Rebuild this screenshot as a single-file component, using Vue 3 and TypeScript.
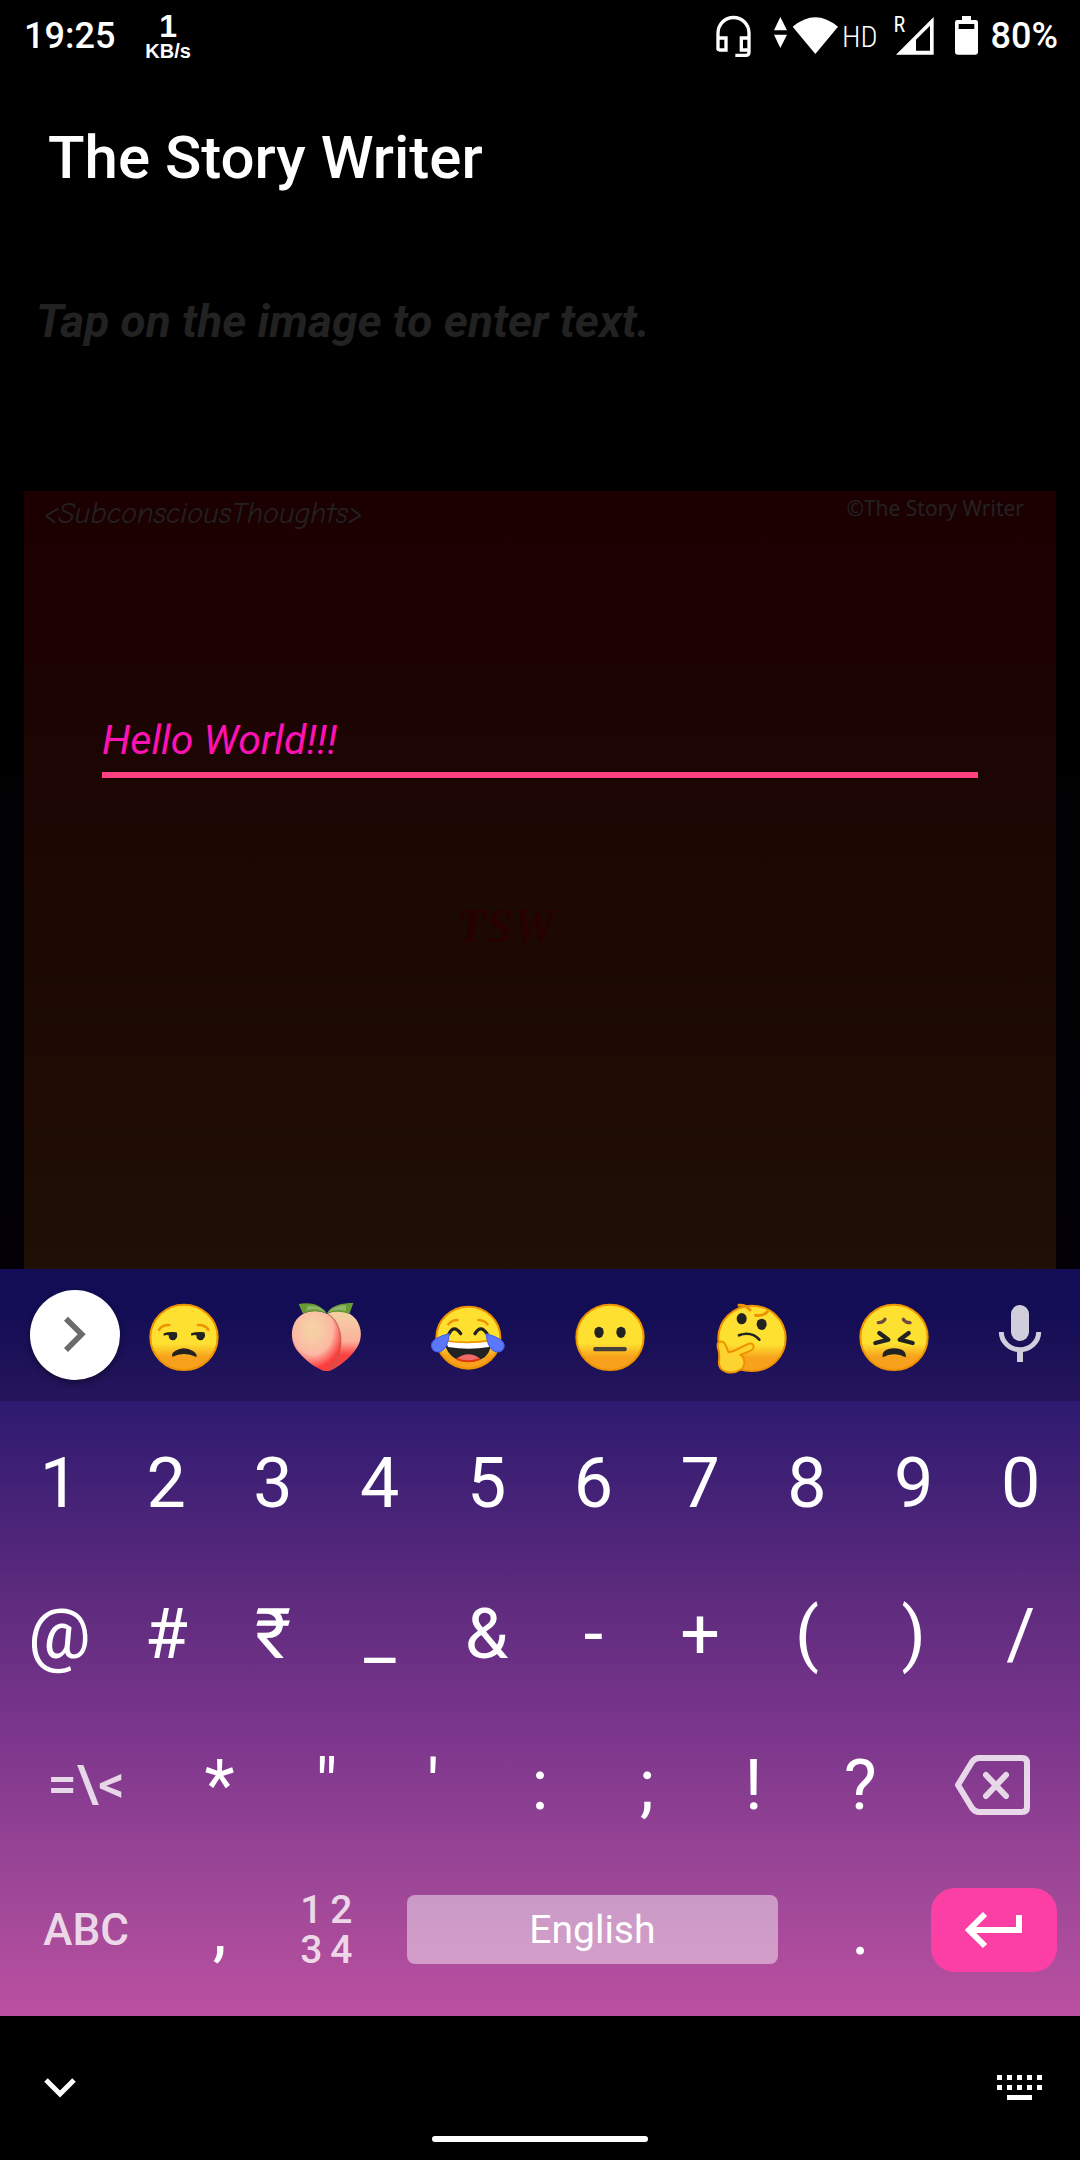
<script setup lang="ts">
import { ref } from 'vue'

const story = ref('Hello World!!!')

const digitRow: string[] = ['1', '2', '3', '4', '5', '6', '7', '8', '9', '0']
const symbolRow: string[] = ['@', '#', '₹', '_', '&', '-', '+', '(', ')', '/']
const punctuationRow: string[] = ['*', '"', "'", ':', ';', '!', '?']

function type(key: string): void {
  story.value += key
}

function erase(): void {
  story.value = story.value.slice(0, -1)
}
</script>

<template>
  <div class="phone">
    <header class="status">
      <span class="clock">19:25</span>
      <span class="speed"><b class="rate">1</b><span class="unit">KB/s</span></span>
      <span class="status-icons">
        <svg class="i-head" viewBox="105 42 111 132" fill="none" stroke="#fff" stroke-width="10">
          <path d="M114 150V99a46 46 0 0 1 93 0v58q0 9-9 9h-32M114 114h24v36h-19q-5 0-5-5M207 114h-23v36h23" />
        </svg>
        <svg class="i-arrows" viewBox="279 42 45 132" fill="#fff">
          <path d="M301 51l20 40h-39zM282 104h39l-20 40z" />
        </svg>
        <svg class="i-wifi" viewBox="336 42 141 132" fill="#fff">
          <path d="M338 80q68-57 136 0l-68 82z" />
        </svg>
        <span class="hd">HD</span>
        <span class="signal">
          <span class="roam">R</span>
          <svg class="i-signal" viewBox="642 42 120 132" fill="#fff">
            <path fill-rule="evenodd" d="M761 51v113H648zM750 77l-42 42v33h42z" />
          </svg>
        </span>
        <svg class="i-battery" viewBox="822 42 75 132">
          <path fill="#fff" fill-rule="evenodd" d="M846 48h27v12h14q7 0 7 7v90q0 7-7 7h-55q-7 0-7-7V67q0-7 7-7h14zM836 72v15h47V72z" />
        </svg>
        <span class="percent">80%</span>
      </span>
    </header>

    <h1 class="title">The Story Writer</h1>

    <main class="content">
      <p class="hint">Tap on the image to enter text.</p>
      <section class="canvas">
        <div class="canvas-head">
          <span class="tag">&lt;SubconsciousThoughts&gt;</span>
          <span class="credit">©The Story Writer</span>
        </div>
        <input v-model="story" class="story" type="text" aria-label="Story text" />
        <p class="monogram">TSW</p>
      </section>
    </main>

    <section class="keyboard">
      <div class="strip">
        <button class="expand" aria-label="More">
          <svg viewBox="90 90 270 270" fill="none" stroke="#6b6b6b" stroke-width="17">
            <path d="M198 176l47 47-47 47" />
          </svg>
        </button>

        <button class="emoji" aria-label="Unamused face">
          <svg viewBox="444 117 216 216">
            <defs>
              <linearGradient id="face" x1="0" y1="0" x2="0" y2="1">
                <stop offset="0.6" stop-color="#fde030" />
                <stop offset="0.8" stop-color="#f7a11c" />
              </linearGradient>
            </defs>
            <ellipse cx="552" cy="232" rx="101" ry="98" fill="url(#face)" stroke="#ee9200" stroke-width="6" />
            <g fill="none" stroke="#ee9200" stroke-width="8" stroke-linecap="round">
              <path d="M477 209q10-15 31-14M594 195q21-1 31 14" />
            </g>
            <path fill="#222" d="M491 220q18-6 39-3 3 8 1 15-5 10-14 9-11-2-11-15-7-2-15 1zM573 220q18-6 40-3 4 8 1 15-5 10-14 9-11-2-11-15-7-2-15 1zM517 290q-4-10 9-18 26-16 54 2 13 9 9 17-36-18-72-1z" />
          </svg>
        </button>

        <button class="emoji" aria-label="Peach">
          <svg viewBox="870 117 216 216">
            <defs>
              <radialGradient id="peach" cx="0.42" cy="0.3" r="0.75">
                <stop offset="0.15" stop-color="#f5d0a4" />
                <stop offset="0.55" stop-color="#fdb7a4" />
                <stop offset="0.85" stop-color="#fc3c3c" />
                <stop offset="1" stop-color="#e84444" />
              </radialGradient>
              <linearGradient id="half" x1="0" y1="0" x2="0" y2="1">
                <stop offset="0.1" stop-color="#f5cda3" />
                <stop offset="0.5" stop-color="#fdb09c" />
                <stop offset="0.72" stop-color="#fb4141" />
                <stop offset="1" stop-color="#e34747" />
              </linearGradient>
            </defs>
            <path fill="url(#half)" d="M980 163c28-18 68-11 88 15 20 28 20 66-4 95-22 28-54 53-84 63z" />
            <path fill="url(#peach)" d="M980 161c-32-15-69-9-90 17-20 26-20 70 6 99 26 30 55 50 84 59 26-10 40-42 43-84 2-45-16-78-43-91z" />
            <path fill="none" stroke="#b5604e" stroke-width="4" stroke-opacity="0.7" d="M984 162c31 20 43 60 37 101-5 30-13 45-24 59" />
            <path fill="#679c35" d="M896 132c36-6 68 2 84 29-24-10-48-9-71 0zM1060 129c-32 0-66 6-80 32 22-9 46-6 68 1z" />
            <path fill="#8db668" d="M925 137q41 1 55 22-30-18-63-7zM1037 135q-38 3-56 25 25-15 57-7z" />
          </svg>
        </button>

        <button class="emoji" aria-label="Face with tears of joy">
          <svg class="wide" viewBox="145 117 240 216">
            <ellipse cx="266" cy="233" rx="96" ry="93" fill="url(#face)" stroke="#ee9200" stroke-width="6" />
            <g fill="none" stroke="#ee9200" stroke-width="7" stroke-linecap="round">
              <path d="M206 193q10-13 28-13M296 180q19 1 28 13" />
            </g>
            <g fill="none" stroke="#222" stroke-width="10" stroke-linecap="round">
              <path d="M208 221q15-29 35 0M286 221q17-29 36 0" />
            </g>
            <path fill="#222" d="M195 250q70 8 140-2-3 37-31 50-39 16-76-2-27-14-33-46z" />
            <path fill="#fff" d="M199 244q66 10 133-1l-4 18q-61 10-123 0z" />
            <path fill="none" stroke="#ee9200" stroke-width="5" d="M200 243q66 9 131-1" />
            <path fill="#ef6b68" d="M229 297q36-28 73-1-37 18-73 1z" />
            <path fill="none" stroke="#e0380d" stroke-width="6" d="M231 297q35 14 69 0" />
            <path fill="#5b78fb" stroke="#3f5ee8" stroke-width="3" d="M209 221q-5 50-31 55-22 1-23-22 3-21 54-33zM319 221q6 52 32 55 21 2 23-20-2-21-55-35z" />
          </svg>
        </button>

        <button class="emoji" aria-label="Neutral face">
          <svg viewBox="583 117 216 216">
            <ellipse cx="691" cy="232" rx="101" ry="98" fill="url(#face)" stroke="#ee9200" stroke-width="6" />
            <ellipse cx="658" cy="217" rx="14" ry="17" fill="#222" />
            <ellipse cx="724" cy="217" rx="14" ry="17" fill="#222" />
            <rect x="641" y="261" width="100" height="13" rx="5" fill="#443f3c" />
          </svg>
        </button>

        <button class="emoji" aria-label="Thinking face">
          <svg class="tall" viewBox="49 105 216 240">
            <ellipse cx="157" cy="235" rx="101" ry="98" fill="url(#face)" stroke="#ee9200" stroke-width="6" />
            <g fill="none" stroke="#ee9200" stroke-linecap="round">
              <path stroke-width="9" d="M118 136q20-2 33 14M168 166q22 3 35-11" />
            </g>
            <ellipse cx="126" cy="176" rx="15" ry="17" fill="#222" />
            <ellipse cx="186" cy="193" rx="15" ry="17" fill="#222" />
            <path fill="none" stroke="#222" stroke-width="8" stroke-linecap="round" d="M118 226q36-14 61 13" />
            <path fill="#fdd32f" stroke="#ee9200" stroke-width="6" stroke-linejoin="round" d="M55 249q9-9 19 0 7 9 12 28l16-4 45-22q15-3 15 10-1 9-14 13l-26 11q12 4 10 15 5 8 0 16-1 11-12 14-17 12-42 5-23-8-20-32 2-17-1-31-5-13-2-23z" />
          </svg>
        </button>

        <button class="emoji" aria-label="Persevering face">
          <svg viewBox="475 117 216 216">
            <ellipse cx="583" cy="232" rx="101" ry="98" fill="url(#face)" stroke="#ee9200" stroke-width="6" />
            <g fill="none" stroke="#6d4c41" stroke-width="10" stroke-linecap="round">
              <path d="M536 188q15 0 20-10M611 178q6 10 20 10" />
            </g>
            <g fill="none" stroke="#222" stroke-width="13" stroke-linecap="round" stroke-linejoin="round">
              <path d="M539 219l27 20-39 10M627 219l-27 20 39 10" />
            </g>
            <path fill="#222" d="M549 292q-4-25 34-27 39 2 35 27-34-19-69 0z" />
          </svg>
        </button>

        <button class="emoji" aria-label="Voice input">
          <svg viewBox="852 117 216 216">
            <rect x="933" y="135" width="54" height="108" rx="27" fill="#d0cedd" />
            <path fill="none" stroke="#d0cedd" stroke-width="15" d="M904 216a56 53 0 0 0 112 0" />
            <path stroke="#d0cedd" stroke-width="18" d="M960 270v36" />
          </svg>
        </button>
      </div>

      <div class="keys">
        <div class="row">
          <button v-for="k in digitRow" :key="k" class="key" @click="type(k)">{{ k }}</button>
        </div>
        <div class="row">
          <button v-for="k in symbolRow" :key="k" class="key" @click="type(k)">{{ k }}</button>
        </div>
        <div class="row">
          <button class="key side shift">=\&lt;</button>
          <button v-for="k in punctuationRow" :key="k" class="key" @click="type(k)">{{ k }}</button>
          <button class="key side" aria-label="Backspace" @click="erase">
            <svg class="i-back" viewBox="0 0 82 62" fill="none" stroke="currentColor" stroke-width="6">
              <path stroke-linejoin="round" d="M5 31L19 8q3-4 7-4h43q5 0 5 5v44q0 5-5 5H26q-4 0-7-4z" />
              <path stroke-linecap="round" d="M33 21l20 21M53 21L33 42" />
            </svg>
          </button>
        </div>
        <div class="row last">
          <button class="key side">ABC</button>
          <button class="key" @click="type(',')">,</button>
          <button class="key numpad" aria-label="Number pad">
            <span>1</span><span>2</span><span>3</span><span>4</span>
          </button>
          <div class="space-cell">
            <button class="space" @click="type(' ')">English</button>
          </div>
          <button class="key" @click="type('.')">.</button>
          <div class="enter-cell">
            <button class="enter" aria-label="Enter">
              <svg viewBox="0 0 60 38" fill="none" stroke="#fff" stroke-width="6">
                <path d="M21 3L5 19l16 16M6 19h49V4" />
              </svg>
            </button>
          </div>
        </div>
      </div>
    </section>

    <footer class="nav">
      <button class="nav-button" aria-label="Hide keyboard">
        <svg class="i-down" viewBox="0 0 32 20" fill="none" stroke="#fff" stroke-width="5">
          <path d="M2 2l14 14L30 2" />
        </svg>
      </button>
      <span class="home"></span>
      <button class="nav-button" aria-label="Switch keyboard">
        <svg class="i-kbd" viewBox="0 0 46 26" fill="#fff">
          <path d="M0 0h5v5H0zM10 0h5v5h-5zM20 0h5v5h-5zM30 0h5v5h-5zM40 0h5v5h-5zM0 10h5v5H0zM10 10h5v5h-5zM20 10h5v5h-5zM30 10h5v5h-5zM40 10h5v5h-5zM10 20h25v5H10z" />
        </svg>
      </button>
    </footer>
  </div>
</template>

<style>
body {
  margin: 0;
  background: #000;
}
</style>

<style scoped>
.phone {
  display: flex;
  flex-direction: column;
  min-height: 100vh;
  background: #000;
  color: #fff;
  font-family: Roboto, "Noto Sans", sans-serif;
}
button {
  margin: 0;
  padding: 0;
  border: 0;
  background: none;
  color: inherit;
  font: inherit;
}
svg {
  display: block;
  flex: none;
}

.status {
  display: flex;
  align-items: center;
  height: 72px;
  padding: 0 22px 0 24px;
  font-size: 36px;
  font-weight: 500;
}
.clock,
.percent {
  line-height: 76px;
}
.speed {
  display: flex;
  flex-direction: column;
  align-items: center;
  margin-left: 30px;
  font-family: "Liberation Sans", sans-serif;
  font-weight: 700;
}
.rate {
  font-size: 32px;
  line-height: 30px;
}
.unit {
  font-size: 20px;
  line-height: 20px;
}
.status-icons {
  display: flex;
  align-items: center;
  margin-left: auto;
}
.i-head { width: 37px; height: 44px; }
.i-arrows { width: 15px; height: 44px; margin-left: 21px; }
.i-wifi { width: 47px; height: 44px; margin-left: 4px; }
.hd {
  margin-left: 3px;
  font-family: "Roboto Condensed", Roboto, sans-serif;
  font-size: 30px;
  font-weight: 300;
}
.signal {
  position: relative;
  margin-left: 16px;
}
.i-signal { width: 40px; height: 44px; }
.roam {
  position: absolute;
  top: 0;
  left: 0;
  font-family: "Roboto Condensed", Roboto, sans-serif;
  font-size: 22px;
  font-weight: 400;
  line-height: 22px;
}
.i-battery { width: 25px; height: 44px; margin-left: 20px; }
.percent { margin-left: 12px; }

.title {
  margin: 0;
  padding: 0 48px;
  font-size: 60px;
  font-weight: 500;
  line-height: 172px;
}
.content {
  display: flex;
  flex: 1;
  flex-direction: column;
  padding: 0 24px;
  background: linear-gradient(#000 260px, #020005);
}
.hint {
  margin: 45px 0 138px;
  padding: 0 12px;
  color: #222;
  font-size: 46px;
  font-style: italic;
  font-weight: 700;
  line-height: 64px;
}
.canvas {
  display: flex;
  flex: 1;
  flex-direction: column;
  background: linear-gradient(#1c0001, #1c0904 60%, #200f04);
}
.canvas-head {
  display: flex;
  justify-content: space-between;
  height: 44px;
  padding: 0 32px 0 20px;
  color: #222;
}
.tag {
  font-family: "Comic Neue", "Open Sans", sans-serif;
  font-size: 30px;
  font-style: italic;
  font-weight: 500;
  line-height: 46px;
}
.credit {
  font-family: "Noto Sans", sans-serif;
  font-size: 21px;
  line-height: 34px;
}
.story {
  height: 70px;
  box-sizing: border-box;
  margin: 173px 78px 0;
  padding: 0;
  border: 0;
  border-bottom: 6px solid #ff4081;
  border-radius: 0;
  outline: none;
  background: none;
  color: #ff12b4;
  font: italic 400 41px Roboto, sans-serif;
}
.monogram {
  margin: 123px 0 0;
  padding-right: 68px;
  color: #270000;
  font: italic 700 48px/50px "Liberation Serif", serif;
  text-align: center;
}

.keyboard {
  background: linear-gradient(#150f66, #2d1a70 132px, #5e2b7e 332px, #78358b 452px, #a14898 632px, #bb50a1);
}
.strip {
  display: grid;
  grid-template-columns: 113px repeat(6, 1fr) 109px;
  align-items: center;
  height: 132px;
  padding-right: 6px;
  background: linear-gradient(#130d55, #120d55 30%, #26155c);
}
.expand {
  width: 90px;
  height: 90px;
  margin-left: 30px;
  border-radius: 50%;
  background: #fff;
  box-shadow: 0 3px 6px rgba(0, 0, 0, 0.4);
}
.emoji {
  display: flex;
  justify-content: center;
}
.emoji svg {
  width: 72px;
  height: 72px;
}
.emoji .wide { width: 80px; }
.emoji .tall { height: 80px; }
.keys { padding: 6px 6px 17px; }
/* Twenty half-key tracks: a key takes two, a side key three, the space bar eight. */
.row {
  display: grid;
  grid-template-columns: repeat(20, minmax(0, 1fr));
  height: 151px;
}
.last { height: 139px; }
.key {
  display: flex;
  grid-column: span 2;
  align-items: center;
  justify-content: center;
  font-size: 70px;
}
.side {
  grid-column: span 3;
  color: rgba(255, 255, 255, 0.8);
  font-size: 44px;
  font-weight: 500;
}
.shift { font-size: 52px; }
.i-back { width: 82px; height: 62px; }
.numpad {
  display: grid;
  grid-template-columns: 30px 30px;
  align-content: center;
  color: rgba(255, 255, 255, 0.8);
  font-size: 39px;
  font-weight: 500;
  line-height: 40px;
  text-align: center;
}
.space-cell {
  display: flex;
  grid-column: span 8;
  align-items: center;
  padding: 0 29px 0 27px;
}
.space {
  flex: 1;
  height: 69px;
  border-radius: 8px;
  background: rgba(255, 255, 255, 0.45);
  font-size: 39px;
}
.enter-cell {
  display: flex;
  grid-column: span 3;
  align-items: center;
  justify-content: center;
}
.enter {
  display: flex;
  align-items: center;
  justify-content: center;
  width: 126px;
  height: 84px;
  border-radius: 24px;
  background: #fc3fa4;
}
.enter svg { width: 60px; height: 38px; }

.nav {
  display: grid;
  grid-template-columns: 120px 1fr 120px;
  height: 144px;
}
.nav-button {
  display: flex;
  align-items: center;
  justify-content: center;
}
.i-down { width: 32px; height: 20px; }
.i-kbd { width: 46px; height: 26px; }
.home {
  align-self: end;
  justify-self: center;
  width: 216px;
  height: 6px;
  margin-bottom: 18px;
  border-radius: 3px;
  background: #fff;
}
</style>
